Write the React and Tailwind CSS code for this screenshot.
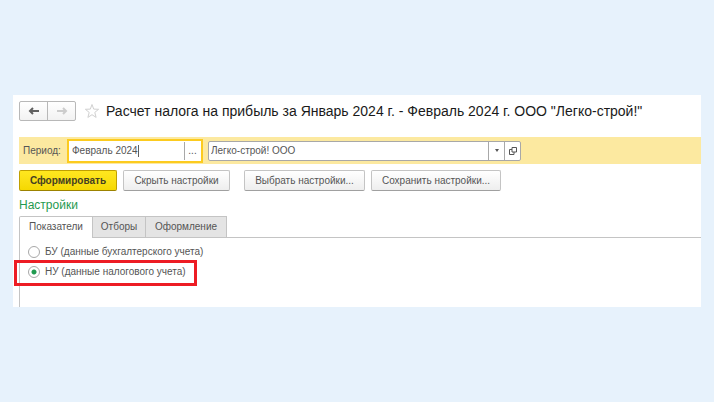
import React, { useState } from 'react';

const tabs = [
    { id: 'indicators', label: 'Показатели', width: 'w-[74px]' },
    { id: 'filters', label: 'Отборы', width: 'w-[53px]' },
    { id: 'design', label: 'Оформление', width: 'w-[81px]' },
];

const modes = [
    { id: 'bu', label: 'БУ (данные бухгалтерского учета)' },
    { id: 'nu', label: 'НУ (данные налогового учета)', marked: true },
];

const ArrowIcon = ({ className }) => (
    <svg viewBox="0 0 12 10" className={`w-3 h-[10px] ${className}`} fill="none" stroke="currentColor" strokeWidth="2">
        <path d="M11 5H2M5 2L2 5l3 3" />
    </svg>
);

const StarIcon = () => (
    <svg viewBox="0 0 16 16" className="w-4 h-4 text-[#d0d0d0]" fill="none" stroke="currentColor">
        <path d="M8 1.5l1.7 4.6 4.9.2-3.8 3.1 1.3 5L8 11.7l-4.1 2.7 1.3-5-3.8-3.1 4.9-.2z" />
    </svg>
);

const OpenIcon = () => (
    <svg viewBox="0 0 8 8" className="w-2 h-2" fill="none" stroke="currentColor">
        <path d="M3 .5h4.5V5H3zM3 2.5H.5v5H5V5" />
    </svg>
);

const ActionButton = ({ children, className }) => (
    <button
        type="button"
        className={`h-[21px] shrink-0 rounded-[2px] border border-[#c4c4c4] border-b-[#a0a0a0] bg-linear-to-b from-white to-[#eeeeee] text-center ${className}`}
    >
        {children}
    </button>
);

const App = () => {
    const [tab, setTab] = useState('indicators');
    const [mode, setMode] = useState('nu');
    const [period, setPeriod] = useState('Февраль 2024');
    const [company, setCompany] = useState('Легко-строй! ООО');

    return (
        <div className="flex min-h-screen flex-col justify-center bg-[#e7f2fc] px-[13px] font-['Liberation_Sans',Arial,sans-serif] text-[10px] leading-4 text-[#555555]">
            <main className="bg-white pt-[6px] pl-[6px]">
                <header className="flex h-5 items-center">
                    <div className="flex h-5 w-[57px] shrink-0 rounded-[2px] border border-[#b8b8b8] bg-linear-to-b from-white to-[#f2f2f2]">
                        <button type="button" aria-label="Назад" className="flex flex-1 items-center justify-center border-r border-[#b8b8b8]">
                            <ArrowIcon className="text-[#606060]" />
                        </button>
                        <button type="button" aria-label="Вперед" className="flex flex-1 items-center justify-center">
                            <ArrowIcon className="rotate-180 text-[#cccccc]" />
                        </button>
                    </div>
                    <button type="button" aria-label="В избранное" className="mr-[6px] ml-2 shrink-0">
                        <StarIcon />
                    </button>
                    <h1 className="text-[14px] leading-5 whitespace-nowrap text-[#1a1a1a]">
                        Расчет налога на прибыль за Январь 2024 г. - Февраль 2024 г. ООО "Легко-строй!"
                    </h1>
                </header>

                <div className="mt-4 flex h-[27px] items-center bg-[#fce9a0] pl-1">
                    <label htmlFor="period" className="w-11 shrink-0">Период:</label>
                    <div className="flex h-6 w-[136px] shrink-0 border-2 border-[#fccb1f] bg-white">
                        <div className="m-px flex flex-1 items-center">
                            <div className="flex h-full w-[115px] items-center border-r border-[#a8a8a8]">
                                <input
                                    id="period"
                                    value={period}
                                    onChange={(e) => setPeriod(e.target.value)}
                                    className="field-sizing-content border-r border-[#606060] pl-[2px] leading-3 outline-none"
                                />
                            </div>
                            <button type="button" aria-label="Выбрать период" className="flex-1 text-center">...</button>
                        </div>
                    </div>
                    <div className="ml-[5px] flex h-5 w-[313px] shrink-0 rounded-[2px] border border-[#a8a8a8] bg-white">
                        <input
                            aria-label="Организация"
                            value={company}
                            onChange={(e) => setCompany(e.target.value)}
                            className="min-w-0 flex-1 pl-[2px] outline-none"
                        />
                        <button type="button" aria-label="Открыть список" className="flex w-4 items-center justify-center border-l border-[#a8a8a8]">
                            <svg viewBox="0 0 4 3" className="h-[3px] w-1" fill="currentColor">
                                <path d="M0 0h4L2 3z" />
                            </svg>
                        </button>
                        <button type="button" aria-label="Открыть" className="flex w-4 items-center justify-center border-l border-[#a8a8a8]">
                            <OpenIcon />
                        </button>
                    </div>
                </div>

                <div className="mt-[6px] flex">
                    <button
                        type="button"
                        className="h-[21px] w-[98px] shrink-0 rounded-[2px] border border-[#c0a000] border-b-[#9c8200] bg-linear-to-b from-[#ffe71f] to-[#f5d800] text-center font-bold text-[#444022]"
                    >
                        Сформировать
                    </button>
                    <ActionButton className="ml-[6px] w-[107px]">Скрыть настройки</ActionButton>
                    <ActionButton className="ml-[14px] w-[121px]">Выбрать настройки...</ActionButton>
                    <ActionButton className="ml-[6px] w-[130px]">Сохранить настройки...</ActionButton>
                </div>

                <h2 className="mt-1 text-[12px] leading-5 text-[#1f9a4f]">Настройки</h2>

                <div role="tablist" className="mt-px flex h-[22px] border-b border-[#c4c4c4]">
                    {tabs.map((t, i) => (
                        <button
                            key={t.id}
                            type="button"
                            role="tab"
                            aria-selected={tab === t.id}
                            onClick={() => setTab(t.id)}
                            className={`shrink-0 border-t border-r border-[#c4c4c4] text-center ${t.width} ${i === 0 ? 'rounded-tl-[2px] border-l' : ''} ${tab === t.id ? '-mb-px bg-white pb-px' : 'bg-[#e4e4e4]'}`}
                        >
                            {t.label}
                        </button>
                    ))}
                </div>

                <div role="tabpanel" className="h-[69px] border-l border-[#c4c4c4] pt-1 pl-2">
                    {modes.map((m) => (
                        <label key={m.id} className="relative flex h-5 w-fit items-center gap-[5px]">
                            <input
                                type="radio"
                                name="mode"
                                checked={mode === m.id}
                                onChange={() => setMode(m.id)}
                                className="h-3 w-3 appearance-none rounded-full border border-[#a8a8a8] bg-white bg-[radial-gradient(circle,#1f9a4f_2px,transparent_3px)] not-checked:bg-none"
                            />
                            {m.label}
                            {m.marked && (
                                <span className="pointer-events-none absolute -top-[2px] -right-[11px] -left-[14px] h-[26px] border-3 border-[#ed1c24]" />
                            )}
                        </label>
                    ))}
                </div>
            </main>
        </div>
    );
};

export default App;
